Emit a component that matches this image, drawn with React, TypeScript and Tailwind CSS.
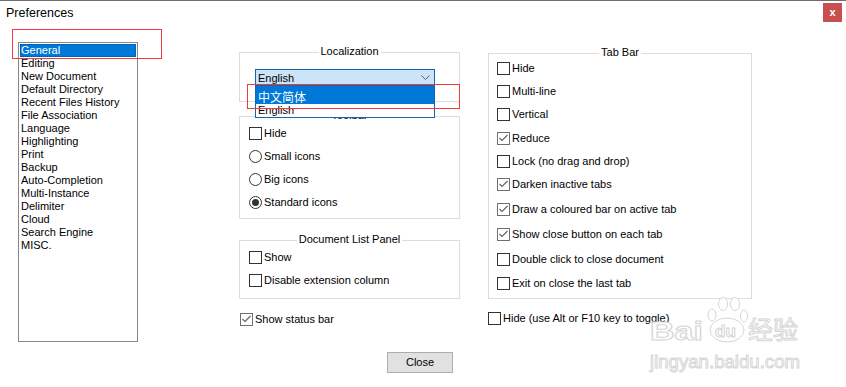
import type { ReactNode } from "react";

const listItems = [
	"General",
	"Editing",
	"New Document",
	"Default Directory",
	"Recent Files History",
	"File Association",
	"Language",
	"Highlighting",
	"Print",
	"Backup",
	"Auto-Completion",
	"Multi-Instance",
	"Delimiter",
	"Cloud",
	"Search Engine",
	"MISC.",
];

const tabBarOptions = [
	{ label: "Hide", checked: false, gap: "" },
	{ label: "Multi-line", checked: false, gap: "mt-[10px]" },
	{ label: "Vertical", checked: false, gap: "mt-[10px]" },
	{ label: "Reduce", checked: true, gap: "mt-[11px]" },
	{ label: "Lock (no drag and drop)", checked: false, gap: "mt-[10px]" },
	{ label: "Darken inactive tabs", checked: true, gap: "mt-[10px]" },
	{ label: "Draw a coloured bar on active tab", checked: true, gap: "mt-[12px]" },
	{ label: "Show close button on each tab", checked: true, gap: "mt-[12px]" },
	{ label: "Double click to close document", checked: false, gap: "mt-[12px]" },
	{ label: "Exit on close the last tab", checked: false, gap: "mt-[11px]" },
];

function CheckBox({ checked }: { checked?: boolean }) {
	return (
		<span
			className={`w-[13px] h-[13px] shrink-0 border bg-white flex items-center justify-center ${
				checked ? "border-[#6f6f6f]" : "border-[#333333]"
			}`}>
			{checked && (
				<svg width="11" height="11" viewBox="0 0 11 11">
					<path d="M1.5 5 L4 7.5 L9.5 2" fill="none" stroke="#5f5f5f" strokeWidth="1.1" />
				</svg>
			)}
		</span>
	);
}

function Radio({ checked }: { checked?: boolean }) {
	return (
		<span className="w-[13px] h-[13px] shrink-0 rounded-full border border-[#333333] bg-white flex items-center justify-center">
			{checked && <span className="w-[7px] h-[7px] rounded-full bg-[#333333]" />}
		</span>
	);
}

function Option({ control, label, className = "" }: { control: ReactNode; label: string; className?: string }) {
	return (
		<div className={`flex items-center h-[13px] ${className}`}>
			{control}
			<span className="ml-[2px] text-[11px] leading-[13px] whitespace-nowrap">{label}</span>
		</div>
	);
}

function Group({ title, className = "", children }: { title: string; className?: string; children?: ReactNode }) {
	return (
		<div className={`relative border border-[#dcdcdc] ${className}`}>
			<span className="absolute -top-[8px] left-1/2 -translate-x-1/2 bg-white px-[2px] text-[11px] leading-[13px] whitespace-nowrap">
				{title}
			</span>
			{children}
		</div>
	);
}

// faint "Baidu 经验" watermark that sits over the bottom-right corner
function Watermark() {
	return (
		<svg
			className="absolute left-[645px] top-[292px] pointer-events-none"
			width="170"
			height="85"
			viewBox="0 0 170 85">
			<g fill="#ffffff" stroke="#d6d6d6" strokeWidth="1">
				<text x="5" y="47" fontSize="25" fontWeight="bold" fontFamily="Liberation Sans, sans-serif" textLength="53" lengthAdjust="spacingAndGlyphs">
					Bai
				</text>
				<ellipse cx="67" cy="22" rx="4" ry="6" />
				<ellipse cx="78" cy="11" rx="4.5" ry="6.5" />
				<ellipse cx="90" cy="11" rx="4.5" ry="6.5" />
				<ellipse cx="99" cy="23" rx="3.5" ry="6" />
				<ellipse cx="82" cy="37" rx="17" ry="12" />
				<text x="70" y="44" fontSize="17" fontWeight="bold" fontFamily="Liberation Sans, sans-serif">
					du
				</text>
				<text x="103" y="46" fontSize="25" fontFamily="'Noto Sans CJK SC', sans-serif" textLength="50" lengthAdjust="spacingAndGlyphs">
					经验
				</text>
				<text x="5" y="75" fontSize="19" fontFamily="Liberation Sans, sans-serif" textLength="150" lengthAdjust="spacingAndGlyphs">
					jingyan.baidu.com
				</text>
			</g>
		</svg>
	);
}

export default function App() {
	return (
		<div className="relative w-[846px] h-[387px] overflow-hidden bg-white border-t border-[#6e6e6e] text-black font-['Liberation_Sans',Arial,sans-serif]">
			{/* title bar */}
			<div className="flex h-[41px] items-start justify-between">
				<div className="pl-[6px] pt-[5px] text-[12.5px] leading-[15px]">Preferences</div>
				<button
					type="button"
					className="mr-[4px] mt-[2px] w-[19px] h-[19px] bg-[#c75050] text-white text-[11px] font-bold leading-[17px] flex items-center justify-center">
					x
				</button>
			</div>

			{/* body */}
			<div className="flex pl-[18px] h-[300px]">
				<div className="w-[120px] h-[300px] border border-[#828790] p-[1px] text-[11px] leading-[13px]">
					{listItems.map((item, i) => (
						<div
							key={item}
							className={`h-[13px] pl-[1px] whitespace-nowrap ${
								i === 0 ? "bg-[#0078d7] text-white outline outline-1 outline-dotted outline-[#0a4f8f] -outline-offset-1" : ""
							}`}>
							{item}
						</div>
					))}
				</div>

				{/* middle column */}
				<div className="ml-[101px] w-[221px] flex flex-col">
					<Group title="Localization" className="mt-[10px] h-[50px] z-10">
						<div className="pt-[16px] pl-[15px]">
							<div className="relative w-[180px] h-[17px] border border-[#1565b0] bg-[#cce4f7] flex items-center justify-between pl-[2px] pr-[4px]">
								<span className="text-[11px] leading-[13px] pt-[2px]">English</span>
								<svg width="9" height="5" viewBox="0 0 9 5">
									<path d="M0.5 0.5 L4.5 4.5 L8.5 0.5" fill="none" stroke="#606060" strokeWidth="1" />
								</svg>
								<div className="absolute left-[-1px] top-[15px] w-[180px] h-[33px] border border-[#1565b0] bg-white">
									<div className="h-[18px] bg-[#0078d7] text-white pl-[2px] pt-[5px] text-[12px] leading-[12px] font-['Noto_Sans_CJK_SC',sans-serif]">
										中文简体
									</div>
									<div className="h-[13px] pl-[2px] text-[11px] leading-[13px]">English</div>
								</div>
							</div>
						</div>
					</Group>

					<Group title="Toolbar" className="mt-[14px] h-[103px]">
						<div className="pt-[10px] pl-[9px] flex flex-col gap-[10px]">
							<Option control={<CheckBox />} label="Hide" />
							<Option control={<Radio />} label="Small icons" />
							<Option control={<Radio />} label="Big icons" />
							<Option control={<Radio checked />} label="Standard icons" />
						</div>
					</Group>

					<Group title="Document List Panel" className="mt-[21px] h-[59px]">
						<div className="pt-[10px] pl-[9px] flex flex-col gap-[10px]">
							<Option control={<CheckBox />} label="Show" />
							<Option control={<CheckBox />} label="Disable extension column" />
						</div>
					</Group>

					<Option control={<CheckBox checked />} label="Show status bar" className="mt-[14px] ml-[1px]" />
				</div>

				{/* right column */}
				<div className="ml-[28px] w-[264px] flex flex-col">
					<Group title="Tab Bar" className="mt-[11px] h-[246px]">
						<div className="pt-[8px] pl-[8px] flex flex-col">
							{tabBarOptions.map((o) => (
								<Option key={o.label} control={<CheckBox checked={o.checked} />} label={o.label} className={o.gap} />
							))}
						</div>
					</Group>
					<Option control={<CheckBox />} label="Hide (use Alt or F10 key to toggle)" className="mt-[13px]" />
				</div>
			</div>

			<div className="flex mt-[10px] pl-[387px]">
				<button
					type="button"
					className="w-[66px] h-[21px] bg-[#e1e1e1] border border-[#adadad] text-[11px] leading-[19px] text-center">
					Close
				</button>
			</div>

			<Watermark />

			{/* annotation boxes */}
			<div className="absolute left-[12px] top-[28px] w-[150px] h-[30px] border border-[#ef3b3b] pointer-events-none" />
			<div className="absolute left-[247px] top-[83px] w-[213px] h-[25px] border border-[#ef3b3b] pointer-events-none z-20" />
		</div>
	);
}
